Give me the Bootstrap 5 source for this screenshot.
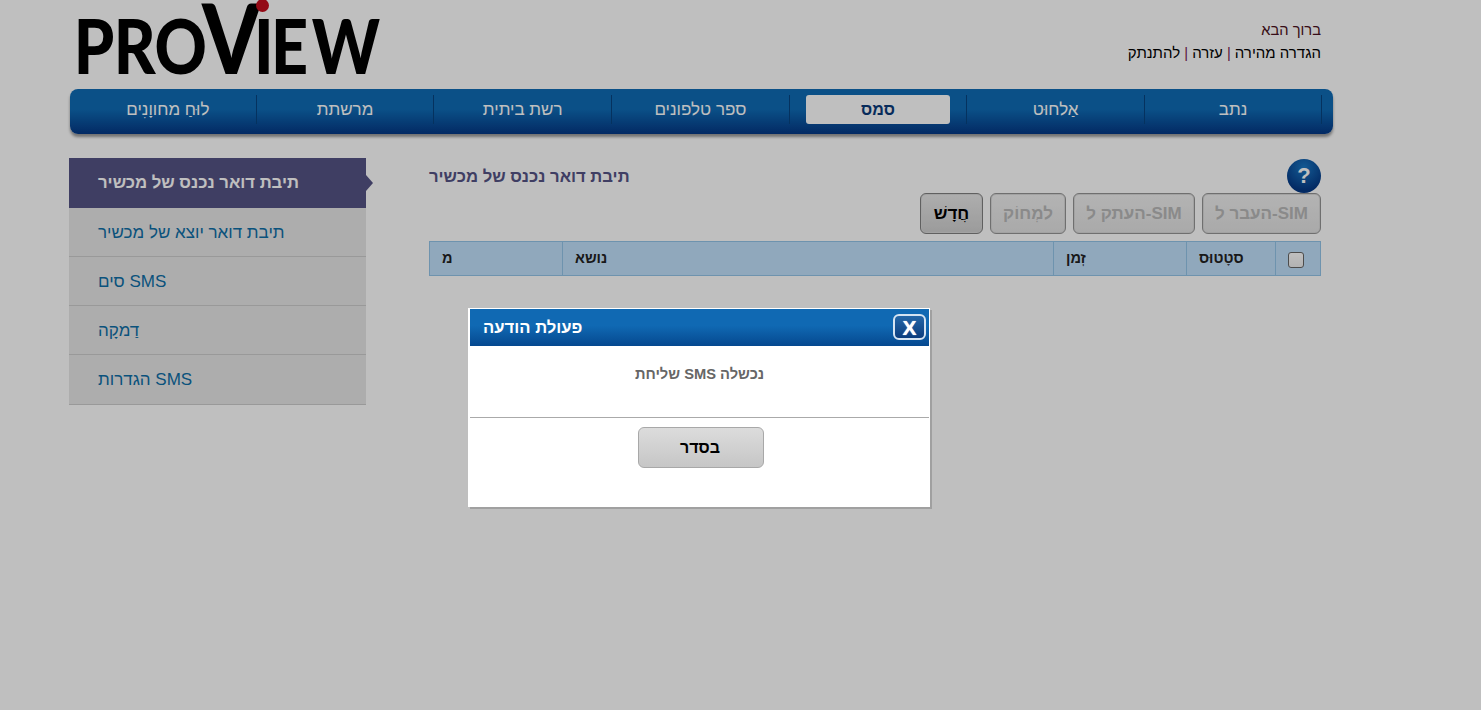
<!DOCTYPE html>
<html lang="he">
<head>
<meta charset="utf-8">
<title>Proview</title>
<link href="https://cdn.jsdelivr.net/npm/bootstrap@5.3.0/dist/css/bootstrap.min.css" rel="stylesheet">
<style>
html,body{height:100%}
body{background:#fff;font-family:"Liberation Sans",Arial,sans-serif;font-size:14px;color:#000;overflow:hidden;position:relative}
.pv-wrap{margin-left:69px;width:1265px}
.pv-top{height:89px}
.pv-logo{display:block;margin-left:0}
.pv-user{padding:19px 13px 0 0;font-size:14.7px;line-height:23px;color:#4a1020}
.pv-links{margin-top:-1px}
.pv-user a{color:#000;text-decoration:none;font-size:15px}
.pv-user i{font-style:normal;color:#7a1a50}
.pv-nav{height:45px;margin:0 1px 0 1px;border-radius:8px;padding:6px 11px 0 10px;background:linear-gradient(#0f6bb5 0,#0f6bb5 45%,#043885 100%);box-shadow:0 3px 3px rgba(0,0,0,.4);list-style:none}
.pv-nav li{flex:0 0 177.67px;height:29px;border-left:1px solid #07437f;display:flex;padding:0 17px}
.pv-nav li:first-child{border-right:1px solid #07437f;flex-basis:178px}
.pv-nav li:last-child{flex:1 1 0;border-left:0}
.pv-nav a{flex:1;text-align:center;text-decoration:none;color:#fff;font-size:17px;line-height:30px;border-radius:3px;white-space:nowrap}
.pv-nav a.pv-on{background:#fff;color:#0a3a7a;font-weight:700;font-size:16px;margin:0 -1px}
.pv-body{padding-top:24px}
.pv-side{width:297px;flex:none;list-style:none;margin:0;padding:0;position:relative}
.pv-side li{height:49px;line-height:49px;padding-left:29px;font-size:17px;background:#e7e7e7;border-bottom:1px solid #ccc;color:#0e6ea6;text-align:left}
.pv-side li:last-child{height:50px}
.pv-side li.pv-act{background:#555385;color:#fff;font-weight:700;font-size:16.7px;height:50px;line-height:49px;border-bottom:0;position:relative}
.pv-side li.pv-act::after{content:"";position:absolute;left:297px;top:17px;border-left:7px solid #555385;border-top:8px solid transparent;border-bottom:8px solid transparent}
.pv-main{margin-left:63px;width:892px;flex:none}
.pv-head{height:35px}
.pv-title{font-size:16.67px;font-weight:700;color:#555385;line-height:37px;margin:0}
.pv-help{width:34px;height:34px;border-radius:50%;background:radial-gradient(circle at 50% 25%,#1a78c4,#043885 75%);color:#fff;font-size:22px;font-weight:700;text-align:center;line-height:34px;margin-top:1px}
.pv-tools{gap:7px;height:41px}
.pv-btn{height:41px;border:1px solid #8c8c8c;border-radius:6px;font-weight:700;font-size:17px;color:#000;padding:0;line-height:38px;white-space:nowrap;box-shadow:inset 0 0 0 1px #d8d8d8}
.pv-btn.btn:disabled{opacity:1;color:#b8b8b8;background:linear-gradient(#f0f0f0,#e2e2e2);border:1px solid #949494}
.pv-btn.btn{color:#000}
.pv-btn.btn:not(:disabled){background:linear-gradient(#e8e8e8,#cfcfcf);border-color:#808080}
.pv-w1{width:119px}.pv-w2{width:122px}.pv-w3{width:76px}.pv-w4{width:63px}
.pv-table{margin:7px 0 0;width:891px;table-layout:fixed;border-collapse:collapse}
.pv-table th{height:34px;padding:0 12px;background:#c1e0fb;border:1px solid #93c4e8;font-weight:700;font-size:14.5px;color:#222;text-align:left;vertical-align:middle;--bs-table-bg:#c1e0fb;box-shadow:none}
.pv-check{appearance:none;display:block;width:16px;height:16px;margin:2px 0 0;border:1px solid #666;border-radius:3px;background:linear-gradient(#fff,#eee)}
.pv-shade{position:absolute;inset:0;background:rgba(0,0,0,.25);z-index:10}
.pv-dialog{position:absolute;left:468px;top:308px;width:462px;height:199px;background:#fff;border-style:solid;border-color:#fff;border-width:1px 1px 1px 2px;box-shadow:2px 2px 0 #a0a0a0;z-index:11}
.pv-dhead{height:37px;background:linear-gradient(#1069b3 0,#1069b3 45%,#05488f 100%);padding:0 3px 0 13px}
.pv-dtitle{font-size:16.67px;font-weight:700;color:#fff;line-height:38px}
.pv-close{width:33px;height:26px;margin-top:5px;border:2px solid #d5e4f2;border-radius:6px;background:linear-gradient(#2467a8,#0b3d7e);color:#fff;font-size:21px;font-weight:700;line-height:21px;padding:0;text-align:center;text-shadow:0 0 1px #fff}
.pv-dmsg{height:72px;border-bottom:1px solid #aaa;text-align:center;font-weight:700;font-size:14.7px;color:#666;line-height:56px}
.pv-ok{display:block;margin:9px 0 0 168px;width:126px;height:41px;border:1px solid #a8a8a8;border-radius:6px;background:linear-gradient(#dcdcdc,#c6c6c6);font-weight:700;font-size:16px;color:#000;padding:0 2px 0 0;line-height:37px}
</style>
</head>
<body>
<div class="pv-wrap">
  <div class="pv-top d-flex justify-content-between">
    <svg class="pv-logo" width="320" height="89" viewBox="69 0 320 89" role="img" aria-label="PROVIEW">
      <text transform="translate(78 74) scale(.85 1)" font-family="Lato,sans-serif" font-weight="900" font-size="76" fill="#000"><tspan x="-5 42 90">PRO</tspan><tspan x="146" font-size="98">V</tspan><tspan x="207 227 275">IEW</tspan></text>
      <circle cx="262.5" cy="5.5" r="6.5" fill="#c40d1c"/>
    </svg>
    <div class="pv-user text-end" dir="rtl">
      <div>ברוך הבא</div>
      <div class="pv-links"><a href="#">הגדרה מהירה</a> <i>|</i> <a href="#">עזרה</a> <i>|</i> <a href="#">להתנתק</a></div>
    </div>
  </div>
  <ul class="pv-nav d-flex" dir="rtl">
    <li><a href="#">נתב</a></li>
    <li><a href="#">אַלחוּט</a></li>
    <li><a href="#" class="pv-on">סמס</a></li>
    <li><a href="#">ספר טלפונים</a></li>
    <li><a href="#">רשת ביתית</a></li>
    <li><a href="#">מרשתת</a></li>
    <li><a href="#">לוּחַ מחווָנִים</a></li>
  </ul>
  <div class="pv-body d-flex">
    <ul class="pv-side">
      <li class="pv-act">תיבת דואר נכנס של מכשיר</li>
      <li>תיבת דואר יוצא של מכשיר</li>
      <li>סים SMS</li>
      <li>דַמקָה</li>
      <li>הגדרות SMS</li>
    </ul>
    <div class="pv-main">
      <div class="pv-head d-flex justify-content-between">
        <h1 class="pv-title">תיבת דואר נכנס של מכשיר</h1>
        <div class="pv-help">?</div>
      </div>
      <div class="pv-tools d-flex justify-content-end">
        <button class="btn pv-btn pv-w4">חֲדָשׁ</button>
        <button class="btn pv-btn pv-w3" disabled>למְחוֹק</button>
        <button class="btn pv-btn pv-w2" disabled>העתק ל-SIM</button>
        <button class="btn pv-btn pv-w1" disabled>העבר ל-SIM</button>
      </div>
      <table class="table pv-table">
        <colgroup><col style="width:133px"><col style="width:491px"><col style="width:133px"><col style="width:89px"><col style="width:45px"></colgroup>
        <thead><tr>
          <th>מ</th><th>נושא</th><th>זְמן</th><th>סטָטוּס</th><th><input type="checkbox" class="pv-check" aria-label="בחר הכל"></th>
        </tr></thead>
      </table>
    </div>
  </div>
</div>
<div class="pv-shade"></div>
<div class="pv-dialog">
  <div class="pv-dhead d-flex justify-content-between">
    <div class="pv-dtitle">פעולת הודעה</div>
    <button class="pv-close" aria-label="סגור">X</button>
  </div>
  <div class="pv-dmsg">שליחת SMS נכשלה</div>
  <button class="btn pv-ok">בסדר</button>
</div>
<script src="https://cdn.jsdelivr.net/npm/bootstrap@5.3.0/dist/js/bootstrap.bundle.min.js"></script>
</body>
</html>
